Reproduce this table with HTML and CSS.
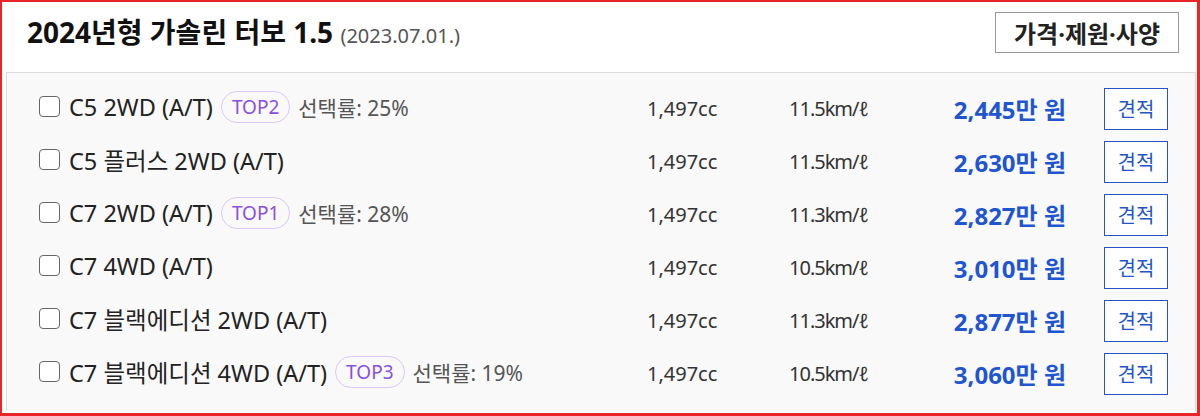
FILE: index.html
```html
<!DOCTYPE html>
<html lang="ko">
<head>
    <meta charset="UTF-8">
    <title>2024년형 가솔린 터보 1.5</title>
    <link rel="stylesheet" href="styles.css">
</head>
<body>
    <div class="frame">
        <div class="head">
            <h1>2024년형 가솔린 터보 1.5 <span class="date">(2023.07.01.)</span></h1>
            <button class="spec-button">가격·제원·사양</button>
        </div>

        <div class="panel">
            <div class="row">
                <label class="name"><input type="checkbox"> C5 2WD (A/T) <span class="badge">TOP2</span> <span class="rate">선택률: 25%</span></label>
                <span class="cc">1,497cc</span>
                <span class="eff">11.5km/ℓ</span>
                <span class="price">2,445만 원</span>
                <button class="quote">견적</button>
            </div>
            <div class="row">
                <label class="name"><input type="checkbox"> C5 플러스 2WD (A/T)</label>
                <span class="cc">1,497cc</span>
                <span class="eff">11.5km/ℓ</span>
                <span class="price">2,630만 원</span>
                <button class="quote">견적</button>
            </div>
            <div class="row">
                <label class="name"><input type="checkbox"> C7 2WD (A/T) <span class="badge">TOP1</span> <span class="rate">선택률: 28%</span></label>
                <span class="cc">1,497cc</span>
                <span class="eff">11.3km/ℓ</span>
                <span class="price">2,827만 원</span>
                <button class="quote">견적</button>
            </div>
            <div class="row">
                <label class="name"><input type="checkbox"> C7 4WD (A/T)</label>
                <span class="cc">1,497cc</span>
                <span class="eff">10.5km/ℓ</span>
                <span class="price">3,010만 원</span>
                <button class="quote">견적</button>
            </div>
            <div class="row">
                <label class="name"><input type="checkbox"> C7 블랙에디션 2WD (A/T)</label>
                <span class="cc">1,497cc</span>
                <span class="eff">11.3km/ℓ</span>
                <span class="price">2,877만 원</span>
                <button class="quote">견적</button>
            </div>
            <div class="row">
                <label class="name"><input type="checkbox"> C7 블랙에디션 4WD (A/T) <span class="badge">TOP3</span> <span class="rate">선택률: 19%</span></label>
                <span class="cc">1,497cc</span>
                <span class="eff">10.5km/ℓ</span>
                <span class="price">3,060만 원</span>
                <button class="quote">견적</button>
            </div>
        </div>
    </div>
</body>
</html>
```

FILE: styles.css
```css
body {
    margin: 0;
    font-family: "Noto Sans", "Noto Sans CJK KR", sans-serif;
    color: #222;
    background: #fff;
}
.frame {
    height: 416px;
    box-sizing: border-box;
    border: 2px solid #e8262a;
    border-right-width: 3px;
    border-bottom-width: 3px;
    padding: 0 1px 0 4px;
}
.head {
    height: 70px;
    display: flex;
    align-items: center;
    justify-content: space-between;
    padding: 0 17px 0 21px;
}
h1 {
    margin: 0;
    font-size: 28px;
    font-weight: bold;
    color: #111;
    position: relative;
    top: -6px;
}
.date {
    font-size: 20px;
    font-weight: normal;
    color: #555;
}
.spec-button {
    width: 184px;
    height: 41px;
    background: #fff;
    border: 1px solid #999;
    font-family: inherit;
    font-size: 24px;
    font-weight: bold;
    color: #222;
    position: relative;
    top: -5px;
}
.panel {
    height: 339px;
    box-sizing: border-box;
    border: 1px solid #dcdcdc;
    border-bottom: none;
    background: #f9f9f9;
    padding: 9px 0 0 32px;
}
.row {
    height: 53px;
    display: grid;
    grid-template-columns: 608px 142px 120px 157px 102px;
    align-items: center;
}
.name {
    display: flex;
    align-items: center;
    gap: 8px;
    font-size: 23.5px;
    color: #222;
    position: relative;
    top: -2px;
}
.name input {
    appearance: none;
    margin: 0 1px 0 0;
    width: 21px;
    height: 21px;
    border: 1.5px solid #666;
    border-radius: 4px;
    background: #fff;
}
.badge {
    height: 30px;
    line-height: 30px;
    padding: 0 10px;
    border: 1.5px solid #dcc8f6;
    border-radius: 16px;
    color: #8a4fdc;
    font-size: 19px;
}
.rate {
    font-size: 21px;
    color: #555;
}
.cc, .eff {
    font-size: 20px;
    color: #333;
}
.eff {
    letter-spacing: -1px;
}
.price {
    text-align: right;
    font-size: 24px;
    font-weight: bold;
    color: #1f55d0;
}
.quote {
    grid-column: 5;
    margin-left: 38px;
    width: 64px;
    height: 42px;
    background: #fff;
    border: 1.5px solid #2454c8;
    font-family: inherit;
    font-size: 20px;
    color: #2454c8;
}
```
